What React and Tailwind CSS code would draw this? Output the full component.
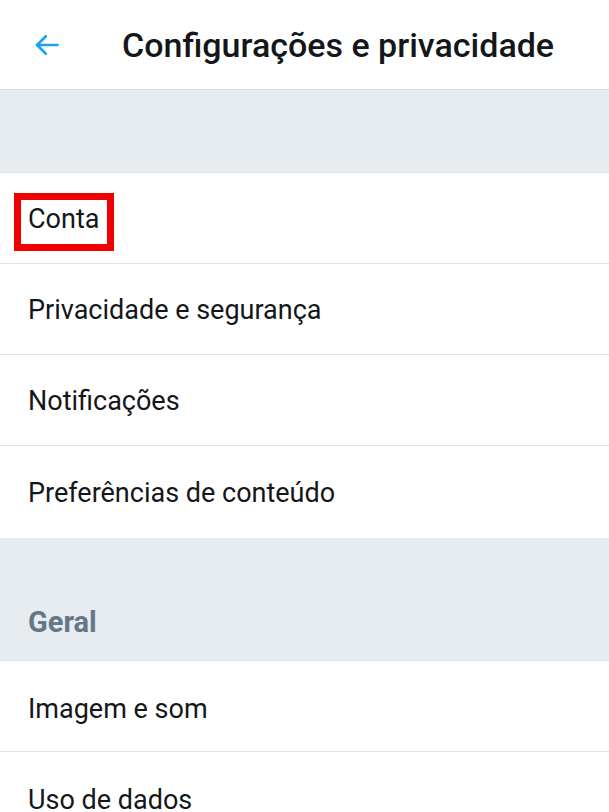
import React from "react";

const Row = ({ label, highlight, lower }) => (
  <div className={`h-[91px] flex items-center px-7 border-b border-[#e1e5e8] bg-white ${lower ? "pt-[7px]" : "pt-[3px]"}`}>
    {highlight ? (
      <span className="relative text-[27px] text-[#14171a]">
        {label}
        <span className="absolute -left-[14px] -right-[15px] -top-[6px] -bottom-[11px] border-[7px] border-[#f00000]" />
      </span>
    ) : (
      <span className="text-[27px] text-[#14171a]">{label}</span>
    )}
  </div>
);

export default function App() {
  return (
    <div className="w-[609px] h-[812px] overflow-hidden bg-white font-['Roboto',sans-serif]">
      <div className="h-[90px] flex items-center border-b border-[#d6dbdf]">
        <div className="w-[122px] pl-[33px]">
          <svg width="28" height="28" viewBox="0 0 24 24" fill="none" stroke="#1da1f2" strokeWidth="2.3" strokeLinecap="round" strokeLinejoin="round">
            <path d="M21 12H3.5" />
            <path d="M11 4.5L3.5 12l7.5 7.5" />
          </svg>
        </div>
        <h1 className="text-[34px] font-medium text-[#14171a] leading-none">Configurações e privacidade</h1>
      </div>

      <div className="h-[83px] bg-[#e6ecf0] border-b border-[#dde2e6]" />

      <Row label="Conta" highlight />
      <Row label="Privacidade e segurança" />
      <Row label="Notificações" />
      <div className="h-[92px] flex items-center px-7 pt-[3px] bg-white">
        <span className="text-[27px] text-[#14171a]">Preferências de conteúdo</span>
      </div>

      <div className="h-[123px] bg-[#e6ecf0] border-b border-[#dde2e6] flex items-end px-7 pb-[23px]">
        <span className="text-[29px] font-bold text-[#657786] leading-none">Geral</span>
      </div>

      <Row label="Imagem e som" lower />
      <Row label="Uso de dados" lower />
    </div>
  );
}
